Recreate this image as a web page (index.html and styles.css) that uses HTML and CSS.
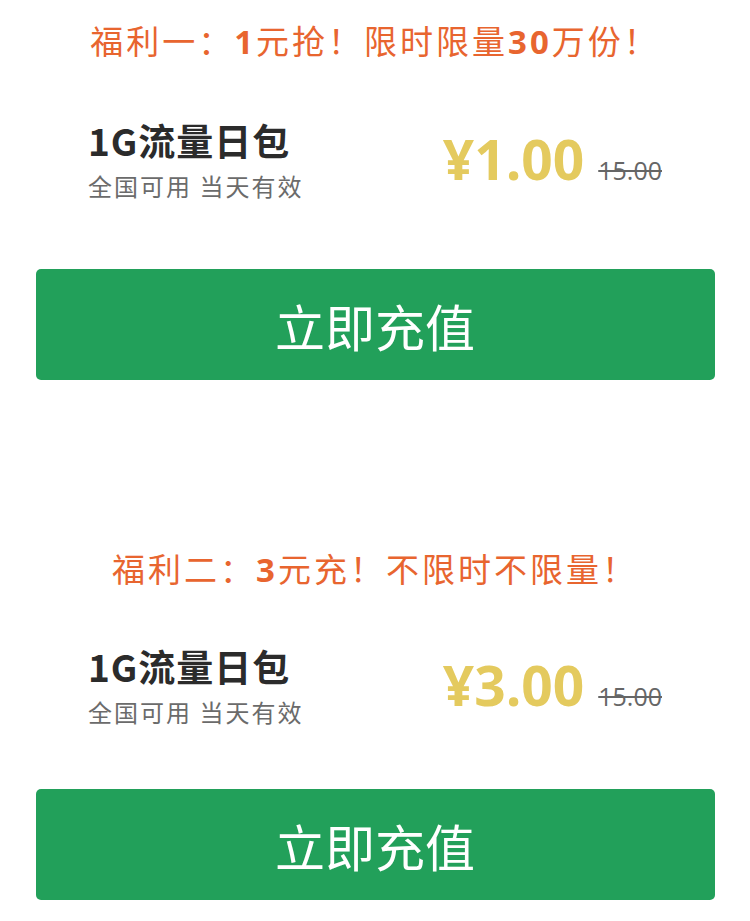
FILE: index.html
```html
<!DOCTYPE html>
<html lang="zh-CN">
  <head>
    <meta charset="UTF-8" />
    <meta name="viewport" content="width=device-width, initial-scale=1.0" />
    <title>流量日包</title>
    <link rel="stylesheet" href="styles.css">
  </head>
  <body>
    <div class="offer">
      <h2 class="offer-title">福利一：<b>1</b>元抢！限时限量<b>30</b>万份！</h2>
      <div class="product">
        <div class="info">
          <h3>1G流量日包</h3>
          <p>全国可用 当天有效</p>
        </div>
        <div class="price">
          <span class="now">¥1.00</span>
          <span class="old">15.00</span>
        </div>
      </div>
      <button class="btn">立即充值</button>
    </div>

    <div class="offer second">
      <h2 class="offer-title">福利二：<b>3</b>元充！不限时不限量！</h2>
      <div class="product">
        <div class="info">
          <h3>1G流量日包</h3>
          <p>全国可用 当天有效</p>
        </div>
        <div class="price">
          <span class="now">¥3.00</span>
          <span class="old">15.00</span>
        </div>
      </div>
      <button class="btn">立即充值</button>
    </div>
  </body>
</html>
```

FILE: styles.css
```css
* {
  margin: 0;
  padding: 0;
  box-sizing: border-box;
}
body {
  background: #fff;
  font-family: "Noto Sans CJK SC", "Noto Sans", sans-serif;
  width: 750px;
}
.offer {
  padding-top: 18px;
}
.offer.second {
  padding-top: 166px;
}
.offer-title {
  text-align: center;
  font-size: 33px;
  line-height: 44px;
  font-weight: 400;
  color: #e8652f;
  letter-spacing: 3px;
}
.offer-title b {
  font-family: "Open Sans", "Noto Sans", sans-serif;
  font-weight: 700;
}
.product {
  display: flex;
  justify-content: space-between;
  align-items: flex-end;
  padding: 0 88px;
  margin-top: 54px;
}
.second .product {
  margin-top: 52px;
}
.info h3 {
  font-size: 37px;
  line-height: 44px;
  font-weight: 700;
  color: #2b2b2b;
  letter-spacing: 1px;
}
.info p {
  margin-top: 9px;
  font-size: 24px;
  line-height: 30px;
  color: #6b6b6b;
  letter-spacing: 2px;
}
.price {
  display: flex;
  align-items: baseline;
  gap: 14px;
  margin-bottom: 12px;
}
.price .now {
  font-family: "Open Sans", "Noto Sans", sans-serif;
  font-size: 55px;
  font-weight: 700;
  color: #e4ca5e;
  line-height: 60px;
}
.price .old {
  font-family: "Open Sans", "Noto Sans", sans-serif;
  font-size: 25px;
  color: #666;
  text-decoration: line-through;
}
.btn {
  display: block;
  width: 679px;
  height: 111px;
  margin: 68px auto 0;
  background-color: #22a05a;
  color: #fff;
  border: none;
  border-radius: 5px;
  font-family: "Noto Sans CJK SC", sans-serif;
  font-size: 50px;
  cursor: pointer;
}
.second .btn {
  margin-top: 62px;
}
```
